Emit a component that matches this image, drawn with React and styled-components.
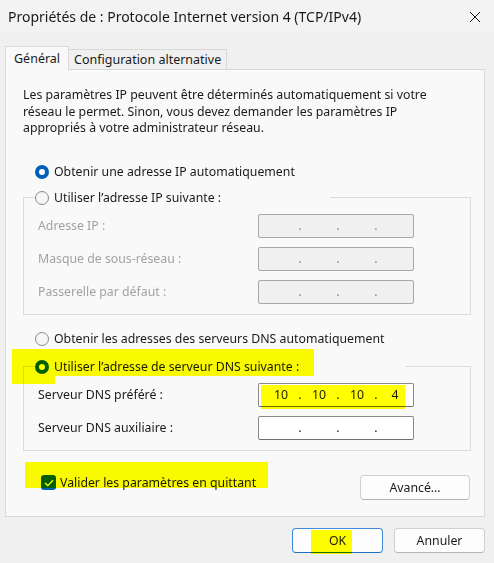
import styled, { createGlobalStyle } from "styled-components";

const GlobalStyle = createGlobalStyle`
  html, body {
    margin: 0;
    padding: 0;
    background: #f0f0f0;
  }
  body {
    font-family: "Noto Sans", "Open Sans", "Liberation Sans", sans-serif;
    font-size: 12.3px;
    color: #1a1a1a;
  }
`;

const Window = styled.div`
  position: relative;
  width: 494px;
  height: 563px;
  display: flex;
  flex-direction: column;
  background: #f0f0f0;
  overflow: hidden;
`;

const TitleBar = styled.div`
  height: 33px;
  display: flex;
  align-items: center;
  justify-content: space-between;
  padding: 0 13px 0 8px;
  background: #f3f3f3;
  font-size: 14px;
  color: #1a1a1a;
`;

const CloseIcon = styled.svg`
  width: 12px;
  height: 12px;
`;

const Body = styled.div`
  display: flex;
  flex-direction: column;
  padding: 13px 9px 0 5px;
`;

const TabStrip = styled.div`
  display: flex;
  align-items: flex-end;
  height: 24px;
  margin-bottom: -1px;
  position: relative;
  z-index: 1;
`;

const Tab = styled.div`
  height: ${(p) => (p.$active ? "24px" : "21px")};
  padding: 0 ${(p) => (p.$active ? "8px" : "5px")};
  display: flex;
  align-items: center;
  border: 1px solid #d9d9d9;
  border-bottom: ${(p) => (p.$active ? "1px solid #f9f9f9" : "1px solid #d9d9d9")};
  background: ${(p) => (p.$active ? "#f9f9f9" : "#f0f0f0")};
  margin-left: ${(p) => (p.$active ? "0" : "-1px")};
  font-size: 12.5px;
  color: #1a1a1a;
  box-sizing: border-box;
`;

const Panel = styled.div`
  height: 448px;
  box-sizing: border-box;
  border: 1px solid #d9d9d9;
  background: #f9f9f9;
  padding: 17px 14px 0 17px;
  display: flex;
  flex-direction: column;
`;

const Intro = styled.p`
  margin: 0;
  line-height: 16.5px;
  width: 440px;
  color: #1a1a1a;
`;

const Spacer = styled.div`
  height: ${(p) => p.$h}px;
  flex: none;
`;

const RadioRow = styled.label`
  display: flex;
  align-items: center;
  gap: 5px;
  color: #1a1a1a;
  height: 18px;
  margin-left: ${(p) => p.$indent || 0}px;
`;

const RadioDot = styled.span`
  width: 14px;
  height: 14px;
  border-radius: 50%;
  box-sizing: border-box;
  flex: none;
  background: ${(p) => (p.$checked ? "#ffffff" : "#f6f6f6")};
  border: ${(p) => (p.$checked ? "4px solid #005fb8" : "1px solid #8a8a8a")};
`;

const Group = styled.fieldset`
  margin: 0;
  width: 448px;
  box-sizing: border-box;
  border: 1px solid #dcdcdc;
  padding: 7px 0 10px 14px;
  display: flex;
  flex-direction: column;
  gap: 9px;
`;

const Legend = styled.legend`
  padding: 0 2px 0 0;
  margin-left: -3px;
  width: ${(p) => p.$width}px;
`;

const FieldRow = styled.div`
  display: flex;
  align-items: center;
  justify-content: space-between;
  padding-right: 56px;
  height: 24px;
  color: ${(p) => (p.$disabled ? "#a2a2a2" : "#1a1a1a")};
`;

const IpBox = styled.div`
  width: 156px;
  height: 24px;
  box-sizing: border-box;
  display: flex;
  align-items: center;
  padding-left: 5px;
  border: 1px solid ${(p) => (p.$disabled ? "#a8a8a8" : "#8a8a8a")};
  border-bottom-color: ${(p) => (p.$disabled ? "#a8a8a8" : "#6e6e6e")};
  border-radius: 2px;
  background: ${(p) => (p.$disabled ? "#f0f0f0" : "#ffffff")};
  color: #1a1a1a;
`;

const Octet = styled.span`
  width: 34px;
  text-align: center;
`;

const Dot = styled.span`
  width: 4px;
  text-align: center;
  color: ${(p) => (p.$disabled ? "#8080a0" : "#1a1a1a")};
`;

const BottomRow = styled.div`
  display: flex;
  align-items: center;
  justify-content: space-between;
  padding: 0 0 0 18px;
  margin-top: 24px;
`;

const CheckRow = styled.label`
  display: flex;
  align-items: center;
  gap: 4px;
  color: #1a1a1a;
  margin-top: -9px;
`;

const CheckBox = styled.span`
  width: 15px;
  height: 15px;
  border-radius: 3px;
  background: #005fb8;
  display: flex;
  align-items: center;
  justify-content: center;
`;

const Button = styled.button`
  width: ${(p) => p.$width}px;
  height: 25px;
  box-sizing: border-box;
  border: 1px solid ${(p) => (p.$primary ? "#3c8bd6" : "#d0d0d0")};
  border-bottom-color: ${(p) => (p.$primary ? "#1f6fc0" : "#b4b4b4")};
  border-radius: 4px;
  background: #fdfdfd;
  font-family: inherit;
  font-size: 12.3px;
  color: #1a1a1a;
  padding: 0;
`;

const Footer = styled.div`
  display: flex;
  justify-content: flex-end;
  gap: 11px;
  padding: 11px 0 0 0;
`;

const Highlight = styled.div`
  position: absolute;
  left: ${(p) => p.$x}px;
  top: ${(p) => p.$y}px;
  width: ${(p) => p.$w}px;
  height: ${(p) => p.$h}px;
  background: #ffff00;
  mix-blend-mode: multiply;
  pointer-events: none;
`;

function Radio({ checked, children, indent }) {
  return (
    <RadioRow $indent={indent}>
      <RadioDot $checked={checked} />
      {children}
    </RadioRow>
  );
}

function IpField({ values, disabled }) {
  const v = values || ["", "", "", ""];
  return (
    <IpBox $disabled={disabled}>
      <Octet>{v[0]}</Octet>
      <Dot $disabled={disabled}>.</Dot>
      <Octet>{v[1]}</Octet>
      <Dot $disabled={disabled}>.</Dot>
      <Octet>{v[2]}</Octet>
      <Dot $disabled={disabled}>.</Dot>
      <Octet>{v[3]}</Octet>
    </IpBox>
  );
}

export default function App() {
  return (
    <Window>
      <GlobalStyle />
      <TitleBar>
        <span>Propriétés de : Protocole Internet version 4 (TCP/IPv4)</span>
        <CloseIcon viewBox="0 0 12 12">
          <path d="M1 1 L11 11 M11 1 L1 11" stroke="#1a1a1a" strokeWidth="1" fill="none" />
        </CloseIcon>
      </TitleBar>
      <Body>
        <TabStrip>
          <Tab $active>Général</Tab>
          <Tab>Configuration alternative</Tab>
        </TabStrip>
        <Panel>
          <Intro>
            Les paramètres IP peuvent être déterminés automatiquement si votre
            réseau le permet. Sinon, vous devez demander les paramètres IP
            appropriés à votre administrateur réseau.
          </Intro>
          <Spacer $h={26} />
          <Radio checked indent={12}>Obtenir une adresse IP automatiquement</Radio>
          <Spacer $h={8} />
          <Group>
            <Legend $width={293}>
              <Radio>Utiliser l’adresse IP suivante :</Radio>
            </Legend>
            <FieldRow $disabled>
              <span>Adresse IP :</span>
              <IpField disabled />
            </FieldRow>
            <FieldRow $disabled>
              <span>Masque de sous-réseau :</span>
              <IpField disabled />
            </FieldRow>
            <FieldRow $disabled>
              <span>Passerelle par défaut :</span>
              <IpField disabled />
            </FieldRow>
          </Group>
          <Spacer $h={15} />
          <Radio indent={12}>Obtenir les adresses des serveurs DNS automatiquement</Radio>
          <Spacer $h={10} />
          <Group>
            <Legend $width={368}>
              <Radio checked>Utiliser l’adresse de serveur DNS suivante :</Radio>
            </Legend>
            <FieldRow>
              <span>Serveur DNS préféré :</span>
              <IpField values={["10", "10", "10", "4"]} />
            </FieldRow>
            <FieldRow>
              <span>Serveur DNS auxiliaire :</span>
              <IpField />
            </FieldRow>
          </Group>
          <BottomRow>
            <CheckRow>
              <CheckBox>
                <svg width="10" height="8" viewBox="0 0 10 8">
                  <path d="M1 4 L3.8 6.6 L9 1.2" stroke="#ffffff" strokeWidth="1.3" fill="none" />
                </svg>
              </CheckBox>
              Valider les paramètres en quittant
            </CheckRow>
            <Button $width={110}>Avancé…</Button>
          </BottomRow>
        </Panel>
        <Footer>
          <Button $primary $width={91}>OK</Button>
          <Button $width={91}>Annuler</Button>
        </Footer>
      </Body>
      <Highlight $x={12} $y={349} $w={302} $h={27} />
      <Highlight $x={12} $y={370} $w={43} $h={14} />
      <Highlight $x={261} $y={385} $w={144} $h={24} />
      <Highlight $x={25} $y={462} $w={243} $h={26} />
      <Highlight $x={311} $y={530} $w={41} $h={24} />
    </Window>
  );
}
